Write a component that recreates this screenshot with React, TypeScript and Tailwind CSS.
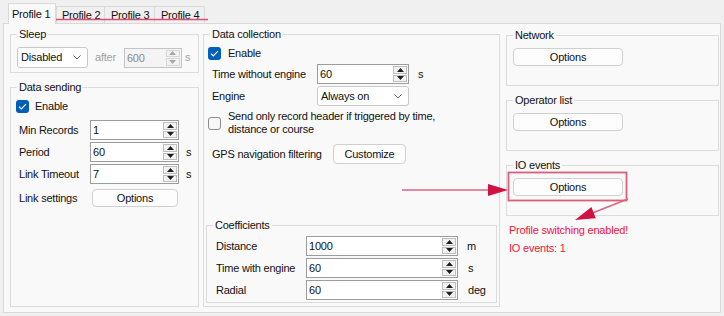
import React from "react";

function Check({ checked }: { checked?: boolean }) {
  return checked ? (
    <div className="w-[13px] h-[13px] rounded-[3px] bg-[#005fb8] flex items-center justify-center shrink-0">
      <svg width="9" height="7" viewBox="0 0 9 7">
        <path d="M1 3.7 L3.3 6 L8 1.2" stroke="#ffffff" strokeWidth="1.1" fill="none" />
      </svg>
    </div>
  ) : (
    <div className="w-[13px] h-[13px] rounded-[3px] border border-[#8a8a8a] bg-[#f7f7f7] shrink-0" />
  );
}

function Spin({ disabled }: { disabled?: boolean }) {
  const box = disabled ? "border-[#d6d6d6] bg-[#f3f3f3]" : "border-[#bdbdbd] bg-[#f2f2f2]";
  const fill = disabled ? "#a8a8a8" : "#1e1e1e";
  return (
    <div className="w-[14px] mr-[1px] my-[1px] flex flex-col gap-[1px]">
      <div className={`flex-1 border ${box} flex items-center justify-center`}>
        <svg width="7" height="4" viewBox="0 0 7 4">
          <path d="M3.5 0L7 4H0Z" fill={fill} />
        </svg>
      </div>
      <div className={`flex-1 border ${box} flex items-center justify-center`}>
        <svg width="7" height="4" viewBox="0 0 7 4">
          <path d="M0 0H7L3.5 4Z" fill={fill} />
        </svg>
      </div>
    </div>
  );
}

function Num({ value, className, disabled }: { value: string; className: string; disabled?: boolean }) {
  return (
    <div
      className={`h-[20px] flex border ${
        disabled ? "border-[#c4c4c4] bg-[#f4f4f4] text-[#8a8a8a]" : "border-[#9c9c9c] bg-white"
      } ${className}`}
    >
      <div className="flex-1 pl-[2px] leading-[18px]">{value}</div>
      <Spin disabled={disabled} />
    </div>
  );
}

function Select({ value, className }: { value: string; className: string }) {
  return (
    <div
      className={`flex items-center justify-between border border-[#c9c9c9] rounded-[3px] bg-white pl-[3px] pr-[6px] ${className}`}
    >
      <span>{value}</span>
      <svg width="8" height="5" viewBox="0 0 8 5">
        <path d="M0.5 0.5 L4 4 L7.5 0.5" stroke="#606060" strokeWidth="1" fill="none" />
      </svg>
    </div>
  );
}

function Btn({ children, className }: { children: React.ReactNode; className: string }) {
  return (
    <div
      className={`flex items-center justify-center border border-[#d0d0d0] rounded-[4px] bg-[#fdfdfd] ${className}`}
    >
      {children}
    </div>
  );
}

function Group({ title, className, children }: { title: string; className: string; children?: React.ReactNode }) {
  return (
    <fieldset className={`border border-[#dcdcdc] min-w-0 ${className}`}>
      <legend className="ml-[6px] px-[2px] leading-[13px]">{title}</legend>
      {children}
    </fieldset>
  );
}

function Tab({ label, selected, className }: { label: string; selected?: boolean; className: string }) {
  return selected ? (
    <div
      className={`relative z-10 h-[21px] mb-[-1px] border border-b-0 border-[#d9d9d9] bg-[#f9f9f9] flex items-center ${className}`}
    >
      {label}
    </div>
  ) : (
    <div className={`h-[17px] border border-b-0 border-[#dadada] bg-[#f0f0f0] flex items-center ${className}`}>
      {label}
    </div>
  );
}

export default function App() {
  return (
    <div className="relative w-[724px] h-[316px] bg-[#f0f0f0] overflow-hidden font-['Liberation_Sans',Arial,sans-serif] text-[11px] tracking-[-0.22px] text-[#111]">
      {/* tabs */}
      <div className="h-[23px] flex items-end pl-[8px]">
        <Tab label="Profile 1" selected className="w-[48px] pl-[3px]" />
        <Tab label="Profile 2" className="w-[49px] pl-[5px]" />
        <Tab label="Profile 3" className="w-[50px] pl-[6px] border-l-0" />
        <Tab label="Profile 4" className="w-[50px] pl-[6px] border-l-0" />
      </div>

      {/* panel */}
      <div className="ml-[3px] w-[718px] h-[290px] border border-[#d9d9d9] bg-[#f9f9f9] flex items-start pt-[4px] pl-[6px] pr-[1px]">
        {/* column 1 */}
        <div className="w-[189px] flex flex-col shrink-0">
          <Group title="Sleep" className="h-[45px]">
            <div className="pt-[6px] pl-[6px] flex items-center">
              <Select value="Disabled" className="w-[71px] h-[21px]" />
              <span className="ml-[7px] text-[#a0a0a0]">after</span>
              <Num value="600" disabled className="ml-[8px] w-[58px]" />
              <span className="ml-[3px] text-[#a0a0a0]">s</span>
            </div>
          </Group>

          <Group title="Data sending" className="mt-[8px] h-[226px]">
            <div className="pt-[6px] flex flex-col">
              <div className="flex items-center pl-[5px] h-[13px]">
                <Check checked />
                <span className="ml-[6px]">Enable</span>
              </div>
              <div className="mt-[7px] flex items-center h-[20px]">
                <span className="pl-[8px] w-[79px] shrink-0">Min Records</span>
                <Num value="1" className="w-[89px]" />
              </div>
              <div className="mt-[2px] flex items-center h-[20px]">
                <span className="pl-[8px] w-[79px] shrink-0">Period</span>
                <Num value="60" className="w-[89px]" />
                <span className="ml-[7px]">s</span>
              </div>
              <div className="mt-[2px] flex items-center h-[20px]">
                <span className="pl-[8px] w-[79px] shrink-0">Link Timeout</span>
                <Num value="7" className="w-[89px]" />
                <span className="ml-[7px]">s</span>
              </div>
              <div className="mt-[5px] flex items-center h-[18px]">
                <span className="pl-[8px] w-[81px] shrink-0">Link settings</span>
                <Btn className="w-[86px] h-[18px]">Options</Btn>
              </div>
            </div>
          </Group>
        </div>

        {/* column 2 */}
        <div className="ml-[4px] w-[297px] shrink-0">
          <Group title="Data collection" className="h-[279px] flex flex-col">
            <div className="pt-[6px] flex flex-col h-full">
              <div className="flex items-center pl-[4px] h-[13px]">
                <Check checked />
                <span className="ml-[7px]">Enable</span>
              </div>
              <div className="mt-[4px] flex items-center h-[20px]">
                <span className="pl-[8px] w-[113px] shrink-0">Time without engine</span>
                <Num value="60" className="w-[92px]" />
                <span className="ml-[9px]">s</span>
              </div>
              <div className="mt-[2px] flex items-center h-[20px]">
                <span className="pl-[8px] w-[113px] shrink-0">Engine</span>
                <Select value="Always on" className="w-[92px] h-[20px]" />
              </div>
              <div className="mt-[4px] flex items-center pl-[4px]">
                <Check />
                <span className="ml-[7px] leading-[13px]">
                  Send only record header if triggered by time,
                  <br />
                  distance or course
                </span>
              </div>
              <div className="mt-[8px] flex items-center h-[20px]">
                <span className="pl-[8px] w-[129px] shrink-0">GPS navigation filtering</span>
                <Btn className="w-[73px] h-[20px]">Customize</Btn>
              </div>

              <Group title="Coefficients" className="mt-auto mb-[3px] mx-[2px] h-[84px]">
                <div className="pt-[4px] flex flex-col gap-[2px]">
                  <div className="flex items-center h-[20px]">
                    <span className="pl-[9px] w-[99px] shrink-0">Distance</span>
                    <Num value="1000" className="w-[152px]" />
                    <span className="ml-[9px]">m</span>
                  </div>
                  <div className="flex items-center h-[20px]">
                    <span className="pl-[9px] w-[99px] shrink-0">Time with engine</span>
                    <Num value="60" className="w-[152px]" />
                    <span className="ml-[10px]">s</span>
                  </div>
                  <div className="flex items-center h-[20px]">
                    <span className="pl-[9px] w-[99px] shrink-0">Radial</span>
                    <Num value="60" className="w-[152px]" />
                    <span className="ml-[10px]">deg</span>
                  </div>
                </div>
              </Group>
            </div>
          </Group>
        </div>

        {/* column 3 */}
        <div className="ml-[6px] w-[213px] shrink-0 mt-[1px] flex flex-col">
          <Group title="Network" className="h-[57px]">
            <div className="pt-[6px] pl-[6px]">
              <Btn className="w-[110px] h-[18px]">Options</Btn>
            </div>
          </Group>
          <Group title="Operator list" className="mt-[8px] h-[57px]">
            <div className="pt-[6px] pl-[6px]">
              <Btn className="w-[110px] h-[18px]">Options</Btn>
            </div>
          </Group>
          <Group title="IO events" className="mt-[8px] h-[57px]">
            <div className="pt-[6px] pl-[6px]">
              <Btn className="w-[110px] h-[18px]">Options</Btn>
            </div>
          </Group>
          <div className="mt-[8px] pl-[3px] leading-[13px] text-[#f0163a]">Profile switching enabled!</div>
          <div className="mt-[5px] pl-[3px] leading-[13px] text-[#f0163a]">IO events: 1</div>
        </div>
      </div>

      {/* annotations */}
      <svg
        className="absolute left-0 top-0 pointer-events-none"
        width="724"
        height="316"
        viewBox="0 0 724 316"
      >
        <line x1="11" y1="19.5" x2="208" y2="19.5" stroke="#dd4d72" strokeWidth="1.3" />
        <rect x="508.5" y="172.5" width="118" height="28" fill="none" stroke="#d9607b" strokeWidth="1.8" />
        <line x1="402" y1="190" x2="492" y2="190" stroke="#dc6582" strokeWidth="1.5" />
        <polygon points="508,190 488,184 488,196" fill="#cf1242" />
        <line x1="628" y1="199" x2="591" y2="213.5" stroke="#dc6582" strokeWidth="1.5" />
        <polygon points="575,220 591.4,207 595.8,218.2" fill="#cf1242" />
      </svg>
    </div>
  );
}
